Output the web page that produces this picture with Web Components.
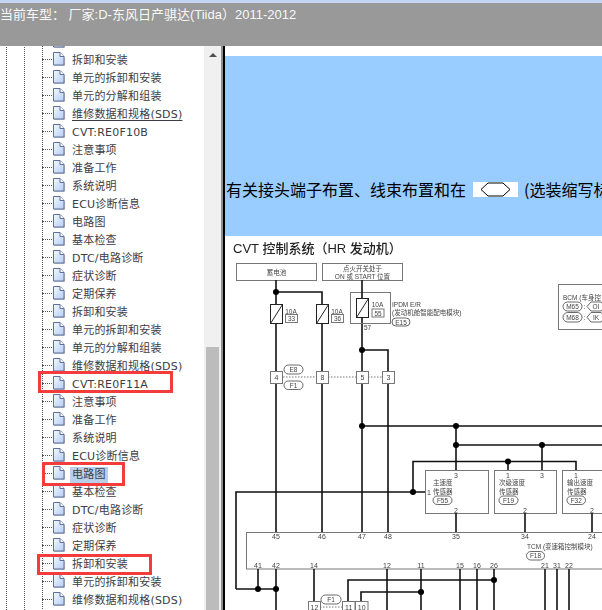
<!DOCTYPE html>
<html lang="zh">
<head>
<meta charset="utf-8">
<title>Tiida</title>
<style>
  html, body { margin: 0; height: 100%; overflow: hidden; background: #fff; }
</style>
</head>
<body>
<app-shell>
  <title-bar slot="top">当前车型： 厂家:D-东风日产骐达(Tiida）2011-2012</title-bar>
  <tree-panel slot="left"></tree-panel>
  <doc-pane slot="right">
    <note-banner>
      <span>有关接头端子布置、线束布置和在</span>
      <span slot="after">(选装缩写标</span>
    </note-banner>
    <wiring-diagram></wiring-diagram>
  </doc-pane>
</app-shell>

<script>
(function () {
  const CJK = '"Noto Sans CJK SC", "Liberation Sans", sans-serif';

  customElements.define(
    "app-shell",
    class extends HTMLElement {
      constructor() {
        super();
        this.attachShadow({ mode: "open" }).innerHTML = `
        <style>
          :host { display: flex; flex-direction: column; width: 602px; height: 610px; overflow: hidden; }
          .main { flex: 1; display: flex; min-height: 0; }
          .split { flex: none; width: 2px; background: #8e8e8e; }
          .edge { flex: none; width: 2px; background: #000; }
        </style>
        <slot name="top"></slot>
        <div class="main">
          <slot name="left"></slot>
          <div class="split"></div>
          <div class="edge"></div>
          <slot name="right"></slot>
        </div>
        `;
      }
    }
  );

  customElements.define(
    "title-bar",
    class extends HTMLElement {
      constructor() {
        super();
        this.attachShadow({ mode: "open" }).innerHTML = `
        <style>
          :host {
            display: block; flex: none; height: 46px; box-sizing: border-box; overflow: hidden;
            background: #999; border-top: 3px solid #c4d6f2;
            color: #f8f8f8; font: 13px/24px "Liberation Sans", "Noto Sans CJK SC", sans-serif; white-space: nowrap;
          }
        </style>
        <slot></slot>
        `;
      }
    }
  );

  const ICON = `
    <svg width="14" height="16" viewBox="0 0 14 16">
      <defs>
        <linearGradient id="pg" x1="0" y1="0" x2="1" y2="1">
          <stop offset="0" stop-color="#f4f8ff"/><stop offset="1" stop-color="#b4cdf4"/>
        </linearGradient>
      </defs>
      <path d="M2 2.5h7l4 4v8.500h-11z" fill="#888" opacity=".45"/>
      <path d="M1.500 1.500h6.500l4 4v8.500h-10.500z" fill="url(#pg)" stroke="#5d6f9c"/>
      <path d="M8 1.500v4h4" fill="#fff" stroke="#5d6f9c"/>
    </svg>`;

  customElements.define(
    "tree-row",
    class extends HTMLElement {
      constructor() {
        super();
        this.attachShadow({ mode: "open" }).innerHTML = `
        <style>
          :host { display: flex; align-items: center; height: 18px; white-space: nowrap; }
          .dots { flex: none; width: 10px; margin-left: 42px; border-top: 1px dotted #555; }
          svg { flex: none; display: block; margin-right: 4px; }
          .label { padding: 0 2px; margin-top: 3px; line-height: 16px; letter-spacing: .2px; }
          :host([mark]) .label { background: #b9cfea; }
          :host([under]) .label { text-decoration: underline; text-underline-offset: 2px; }
        </style>
        <span class="dots"></span>${ICON}<span class="label"><slot></slot></span>
        `;
      }
    }
  );

  customElements.define(
    "tree-panel",
    class extends HTMLElement {
      constructor() {
        super();
        const names = [
          "", "拆卸和安装", "单元的拆卸和安装", "单元的分解和组装", "维修数据和规格(SDS)",
          "CVT:RE0F10B", "注意事项", "准备工作", "系统说明", "ECU诊断信息", "电路图", "基本检查",
          "DTC/电路诊断", "症状诊断", "定期保养", "拆卸和安装", "单元的拆卸和安装", "单元的分解和组装",
          "维修数据和规格(SDS)", "CVT:RE0F11A", "注意事项", "准备工作", "系统说明", "ECU诊断信息",
          "电路图", "基本检查", "DTC/电路诊断", "症状诊断", "定期保养", "拆卸和安装",
          "单元的拆卸和安装", "维修数据和规格(SDS)"
        ];
        const rows = names.map((n, i) => {
          const attr = i === 4 ? " under" : i === 24 ? " mark" : "";
          return `<tree-row${attr}>${n}</tree-row>`;
        }).join("");
        this.attachShadow({ mode: "open" }).innerHTML = `
        <style>
          :host {
            display: flex; flex: none; width: 221px; height: 100%; overflow: hidden; position: relative;
            color: #3c3c44; font: 11px/16px "DejaVu Sans", ${CJK};
          }
          .tree { flex: none; width: 204px; margin-top: -14px; position: relative; }
          .trunk {
            position: absolute; left: 42px; top: 0; width: 0; height: 599px;
            border-left: 1px dotted #555;
          }
          .rail { position: absolute; top: 0; bottom: 0; width: 0; border-left: 1px dotted #555; }
          .hit { position: absolute; border: 3px solid #f43c3c; box-sizing: border-box; }
        </style>
        <div class="tree">
          <div class="rail" style="left:6px"></div>
          <div class="rail" style="left:24px"></div>
          <div class="trunk"></div>
          ${rows}
        </div>
        <scroll-rail></scroll-rail>
        <div class="hit" style="left:38px;top:325px;width:135px;height:22px"></div>
        <div class="hit" style="left:42px;top:416px;width:83px;height:24px"></div>
        <div class="hit" style="left:37px;top:508px;width:115px;height:21px"></div>
        `;
      }
    }
  );

  customElements.define(
    "scroll-rail",
    class extends HTMLElement {
      constructor() {
        super();
        this.attachShadow({ mode: "open" }).innerHTML = `
        <style>
          :host {
            display: flex; flex-direction: column; align-items: center;
            flex: none; width: 17px; height: 100%; background: #f0f0f0;
          }
          .up {
            flex: none; width: 0; height: 0; margin-top: 7px;
            border: 4px solid transparent; border-top: 0; border-bottom: 4px solid #505050;
          }
          .thumb { flex: 1; width: 13px; margin-top: 290px; background: #bcbcbc; }
        </style>
        <div class="up"></div>
        <div class="thumb"></div>
        `;
      }
    }
  );

  customElements.define(
    "doc-pane",
    class extends HTMLElement {
      constructor() {
        super();
        this.attachShadow({ mode: "open" }).innerHTML = `
        <style>
          :host {
            display: flex; flex-direction: column; flex: 1; min-width: 0; height: 100%;
            padding-top: 10px; padding-left: 1px; box-sizing: border-box; background: #fff; overflow: hidden;
          }
        </style>
        <slot></slot>
        `;
      }
    }
  );

  customElements.define(
    "note-banner",
    class extends HTMLElement {
      constructor() {
        super();
        this.attachShadow({ mode: "open" }).innerHTML = `
        <style>
          :host {
            display: flex; align-items: center; flex: none; height: 180px; box-sizing: border-box;
            margin-left: -1px; padding: 86px 0 0 1px;
            background: #99ccff; color: #000; white-space: nowrap; overflow: hidden;
            font: 16px/22px ${CJK};
          }
          .tag {
            flex: none; display: flex; justify-content: center; align-items: center;
            width: 45px; height: 15px; margin: 0 6px 0 7px; background: #fff;
          }
          svg { display: block; }
        </style>
        <slot></slot>
        <span class="tag">
          <svg width="31" height="15" viewBox="0 0 31 15">
            <path d="M1 7.500L8 1h15l7 6.500-7 6.500H8z" fill="#fff" stroke="#000"/>
          </svg>
        </span>
        <slot name="after"></slot>
        `;
      }
    }
  );

  customElements.define(
    "wiring-diagram",
    class extends HTMLElement {
      constructor() {
        super();
        let s = "";
        const line = (pts) => {
          s += `<polyline points="${pts}" fill="none" stroke="#111" stroke-width="1.6"/>`;
        };
        const dot = (x, y) => { s += `<circle cx="${x}" cy="${y}" r="3" fill="#000"/>`; };
        const txt = (x, y, t, size, anchor) => {
          s += `<text x="${x}" y="${y}" font-size="${size || 7}" text-anchor="${anchor || "start"}" dominant-baseline="central">${t}</text>`;
        };
        const rect = (x, y, w, h) => {
          s += `<rect x="${x}" y="${y}" width="${w}" height="${h}" fill="#fff" stroke="#777"/>`;
        };
        const oval = (x, y, w, h, t) => {
          s += `<rect x="${x}" y="${y}" width="${w}" height="${h}" rx="${h / 2}" fill="#fff" stroke="#444" stroke-width=".8"/>`;
          txt(x + w / 2, y + h / 2, t, 6.5, "middle");
        };
        const hex = (x, y, w, h, t) => {
          s += `<path d="M${x} ${y + h / 2}l4 -${h / 2}h${w - 8}l4 ${h / 2}l-4 ${h / 2}h-${w - 8}z" fill="#fff" stroke="#444" stroke-width=".8"/>`;
          txt(x + w / 2, y + h / 2, t, 6.5, "middle");
        };
        const fuse = (x, y, w, h) => {
          s += `<rect x="${x}" y="${y}" width="${w}" height="${h}" fill="#fff" stroke="#222"/>`;
          s += `<line x1="${x}" y1="${y + h}" x2="${x + w}" y2="${y}" stroke="#222"/>`;
        };
        const pin = (x, y, w, t) => {
          rect(x, y, w, 12);
          txt(x + w / 2, y + 6, t, 7, "middle");
        };
        const dotted = (x1, x2, y) => {
          s += `<line x1="${x1}" y1="${y}" x2="${x2}" y2="${y}" stroke="#777" stroke-width="1.2" stroke-dasharray="1.500 1.500"/>`;
        };

        s += `<text class="head" x="233" y="248" font-size="13" dominant-baseline="central">CVT 控制系统（HR 发动机）</text>`;

        // 供电
        rect(236.500, 263.500, 80, 17);
        txt(276.500, 272, "蓄电池", 6.5, "middle");
        rect(322.500, 263.500, 80, 17);
        txt(362.500, 268, "点火开关处于", 6.5, "middle");
        txt(362.500, 276, "ON 或 START 位置", 6.5, "middle");

        line("276,280 276,532");
        line("276,292 322,292 322,532");
        line("362,280 362,532");
        line("362,350 388,350 388,532");
        line("362,426 602,426");
        line("456,426 456,470");
        line("456,445 602,445");
        line("542,445 542,470");
        line("413,492 413,461.500 576,461.500 576,470");
        line("508,461 508,470");
        line("236,589 236,492 425,492");

        dot(276, 292); dot(362, 350); dot(362, 426); dot(456, 426); dot(456, 445);
        dot(542, 445); dot(508, 461.500); dot(413, 492);

        fuse(270.500, 304.500, 12, 19);
        txt(291, 311, "10A", 6.5, "middle");
        rect(285.500, 314.500, 12, 8);
        txt(291.500, 318.500, "33", 6.5, "middle");
        fuse(316.500, 304.500, 12, 19);
        txt(337, 311, "10A", 6.5, "middle");
        rect(331.500, 314.500, 12, 8);
        txt(337.500, 318.500, "36", 6.500, "middle");

        rect(350.500, 292.500, 40, 31);
        line("362,292 362,298");
        fuse(356.500, 298.500, 12, 19);
        line("362,317 362,323");
        txt(377.500, 304, "10A", 6.5, "middle");
        rect(372, 309, 12, 8);
        txt(378, 313, "55", 6.5, "middle");
        txt(364, 327.500, "57", 6.5);
        txt(392, 304, "IPDM E/R", 6.5);
        txt(392, 312, "(发动机舱智能配电模块)", 6.5);
        oval(392, 318, 18, 8, "E15");

        // 线束接头
        dotted(283, 316, 377);
        dotted(328, 356, 377);
        dotted(368, 382, 377);
        pin(270.500, 371.500, 12, "4");
        pin(316.500, 371.500, 12, "8");
        pin(356.500, 371.500, 12, "5");
        pin(382.500, 371.500, 12, "3");
        oval(284, 365, 19, 9, "E8");
        oval(284, 381, 19, 8.500, "F1");

        // BCM
        s += `<rect x="558.500" y="284.500" width="60" height="45" fill="#fff" stroke="#777"/>`;
        txt(563, 297, "BCM (车身控", 6.5);
        oval(563, 302, 19, 9, "M65");
        txt(583.500, 306.500, ":", 6.5);
        hex(587, 302, 18, 9, "OI");
        oval(563, 312.500, 19, 9.500, "M68");
        txt(583.500, 317, ":", 6.5);
        hex(587, 312.500, 18, 9.500, "IK");

        // 传感器
        rect(425.500, 470.500, 63, 43);
        rect(494.500, 470.500, 62, 43);
        rect(562.500, 470.500, 60, 43);
        txt(456, 475, "3", 7, "middle");
        txt(508, 475, "1", 7, "middle");
        txt(542, 475, "3", 7, "middle");
        txt(576, 475, "1", 7, "middle");
        txt(429, 492, "1", 7, "middle");
        txt(456, 510, "2", 7, "middle");
        txt(525, 510, "2", 7, "middle");
        txt(592, 510, "2", 7, "middle");
        txt(433, 482, "主速度", 6.5);
        txt(433, 491, "传感器", 6.5);
        oval(433, 496, 19, 8.500, "F55");
        txt(499, 482, "次级速度", 6.5);
        txt(499, 491, "传感器", 6.5);
        oval(499, 496, 19, 8.500, "F19");
        txt(567, 482, "输出速度", 6.5);
        txt(567, 491, "传感器", 6.5);
        oval(567, 496, 18.500, 8.500, "F32");
        line("456,513 456,532");
        line("525,513 525,532");
        line("592,513 592,532");

        // TCM
        s += `<rect x="246.500" y="532.500" width="376" height="36.500" fill="#fff" stroke="#777"/>`;
        [[276, "45"], [322, "46"], [362, "47"], [388, "48"], [456, "35"], [525, "34"], [592, "24"]]
          .forEach((p) => txt(p[0], 536.500, p[1], 7, "middle"));
        [[258, "41"], [276, "42"], [314, "14"], [387, "12"], [421, "11"], [460, "15"], [477, "16"],
          [494, "26"], [545, "21"], [557, "31"], [569, "22"]]
          .forEach((p) => {
            txt(p[0], 565, p[1], 7, "middle");
            if (p[0] !== 258 && p[0] !== 314) line(`${p[0]},569 ${p[0]},610`);
          });
        txt(527, 546, "TCM (变速箱控制模块)", 6.5);
        oval(526.500, 551.500, 18, 8.500, "F18");

        line("258,569 258,589");
        line("236,589 276,589");
        line("314,569 314,601");
        line("348,601 348,580 494,580");
        line("361,601 361,592 421,592");
        dot(258, 589); dot(276, 589); dot(494, 580); dot(421, 592);

        dotted(320, 342, 607);
        oval(321, 595, 20, 9, "F1");
        pin(308.500, 601.500, 12, "12");
        pin(342.500, 601.500, 12.500, "11");
        pin(355.500, 601.500, 12.500, "10");

        this.attachShadow({ mode: "open" }).innerHTML = `
        <style>
          :host { display: block; flex: none; width: 376px; height: 374px; background: #fff; }
          svg { display: block; filter: blur(.25px); }
          text { fill: #444; font-family: "Liberation Sans", "Noto Sans CJK SC", sans-serif; }
          text.head { fill: #222; font-weight: 500; }
        </style>
        <svg width="376" height="374" viewBox="226 236 376 374">${s}</svg>
        `;
      }
    }
  );
})();
</script>
</body>
</html>
